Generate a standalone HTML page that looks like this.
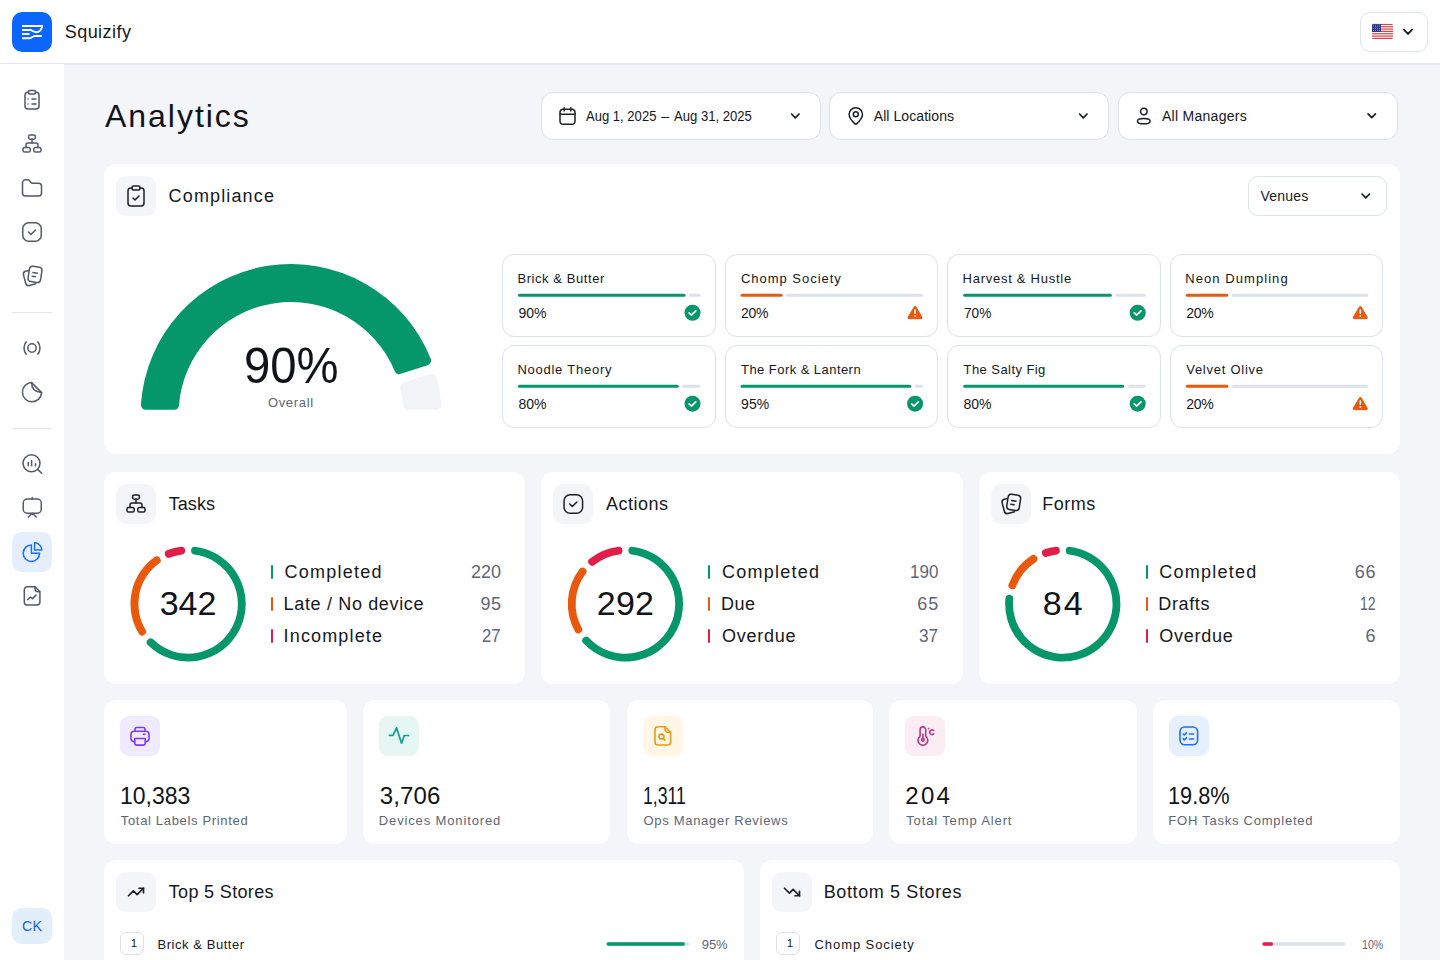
<!DOCTYPE html><html><head><meta charset="utf-8"><title>Squizify Analytics</title><style>
html,body{margin:0;padding:0;}body{width:1440px;height:960px;overflow:hidden;position:relative;background:#f3f5f9;font-family:"Liberation Sans",sans-serif;}
.b{position:absolute;box-sizing:border-box;}.t{position:absolute;white-space:nowrap;}svg{position:absolute;left:0;top:0;}
</style></head><body>
<div class="b" style="left:0px;top:0px;width:1440.00px;height:64.00px;background:#fff;border-radius:0px;border-bottom:1px solid #e6e8ee;box-sizing:border-box;"></div>
<div class="b" style="left:0px;top:64px;width:64.00px;height:896.00px;background:#fff;border-radius:0px;"></div>
<div class="b" style="left:64px;top:64px;width:1376.00px;height:1.00px;background:#e7eaf2;border-radius:0px;"></div>
<div class="b" style="left:12px;top:12px;width:40.00px;height:40.00px;background:#0a66ff;border-radius:10px;"></div>
<div class="b" style="left:1360px;top:12px;width:68.00px;height:40.00px;background:#fff;border-radius:10px;border:1px solid #dfe3ea;"></div>
<div class="b" style="left:12px;top:312px;width:40.00px;height:1.00px;background:#e3e6ec;border-radius:0px;"></div>
<div class="b" style="left:12px;top:428px;width:40.00px;height:1.00px;background:#e3e6ec;border-radius:0px;"></div>
<div class="b" style="left:12px;top:532px;width:40.00px;height:40.00px;background:#e4eefd;border-radius:10px;"></div>
<div class="b" style="left:12px;top:908px;width:40.00px;height:36.00px;background:#e2eefc;border-radius:10px;"></div>
<div class="b" style="left:541px;top:92px;width:280.00px;height:48.00px;background:#fff;border-radius:12px;border:1px solid #dce1ea;"></div>
<div class="b" style="left:829px;top:92px;width:280.00px;height:48.00px;background:#fff;border-radius:12px;border:1px solid #dce1ea;"></div>
<div class="b" style="left:1117.5px;top:92px;width:280.00px;height:48.00px;background:#fff;border-radius:12px;border:1px solid #dce1ea;"></div>
<div class="b" style="left:104px;top:164px;width:1296.00px;height:290.00px;background:#fff;border-radius:12px;"></div>
<div class="b" style="left:116px;top:176px;width:40.00px;height:40.00px;background:#f3f5f9;border-radius:10px;"></div>
<div class="b" style="left:1247.8px;top:176px;width:139.70px;height:40.00px;background:#fff;border-radius:10px;border:1px solid #dce1ea;"></div>
<div class="b" style="left:502px;top:254.25px;width:213.60px;height:82.50px;background:#fff;border-radius:12px;border:1px solid #dce1ea;"></div>
<div class="b" style="left:724.6px;top:254.25px;width:213.60px;height:82.50px;background:#fff;border-radius:12px;border:1px solid #dce1ea;"></div>
<div class="b" style="left:947.2px;top:254.25px;width:213.60px;height:82.50px;background:#fff;border-radius:12px;border:1px solid #dce1ea;"></div>
<div class="b" style="left:1169.8px;top:254.25px;width:213.60px;height:82.50px;background:#fff;border-radius:12px;border:1px solid #dce1ea;"></div>
<div class="b" style="left:502px;top:345.2px;width:213.60px;height:82.50px;background:#fff;border-radius:12px;border:1px solid #dce1ea;"></div>
<div class="b" style="left:724.6px;top:345.2px;width:213.60px;height:82.50px;background:#fff;border-radius:12px;border:1px solid #dce1ea;"></div>
<div class="b" style="left:947.2px;top:345.2px;width:213.60px;height:82.50px;background:#fff;border-radius:12px;border:1px solid #dce1ea;"></div>
<div class="b" style="left:1169.8px;top:345.2px;width:213.60px;height:82.50px;background:#fff;border-radius:12px;border:1px solid #dce1ea;"></div>
<div class="b" style="left:104px;top:472px;width:421.33px;height:212.00px;background:#fff;border-radius:12px;"></div>
<div class="b" style="left:116px;top:484px;width:40.00px;height:40.00px;background:#f3f5f9;border-radius:10px;"></div>
<div class="b" style="left:271px;top:565px;width:2.00px;height:14.00px;background:#059669;border-radius:1px;"></div>
<div class="b" style="left:271px;top:597px;width:2.00px;height:14.00px;background:#ea580c;border-radius:1px;"></div>
<div class="b" style="left:271px;top:629px;width:2.00px;height:14.00px;background:#e11d48;border-radius:1px;"></div>
<div class="b" style="left:541.33px;top:472px;width:421.33px;height:212.00px;background:#fff;border-radius:12px;"></div>
<div class="b" style="left:553.33px;top:484px;width:40.00px;height:40.00px;background:#f3f5f9;border-radius:10px;"></div>
<div class="b" style="left:708.33px;top:565px;width:2.00px;height:14.00px;background:#059669;border-radius:1px;"></div>
<div class="b" style="left:708.33px;top:597px;width:2.00px;height:14.00px;background:#ea580c;border-radius:1px;"></div>
<div class="b" style="left:708.33px;top:629px;width:2.00px;height:14.00px;background:#e11d48;border-radius:1px;"></div>
<div class="b" style="left:978.67px;top:472px;width:421.33px;height:212.00px;background:#fff;border-radius:12px;"></div>
<div class="b" style="left:990.67px;top:484px;width:40.00px;height:40.00px;background:#f3f5f9;border-radius:10px;"></div>
<div class="b" style="left:1145.67px;top:565px;width:2.00px;height:14.00px;background:#059669;border-radius:1px;"></div>
<div class="b" style="left:1145.67px;top:597px;width:2.00px;height:14.00px;background:#ea580c;border-radius:1px;"></div>
<div class="b" style="left:1145.67px;top:629px;width:2.00px;height:14.00px;background:#e11d48;border-radius:1px;"></div>
<div class="b" style="left:104px;top:700px;width:243.00px;height:144.00px;background:#fff;border-radius:12px;"></div>
<div class="b" style="left:120px;top:716px;width:40.00px;height:40.00px;background:#efeafd;border-radius:9px;"></div>
<div class="b" style="left:363px;top:700px;width:247.00px;height:144.00px;background:#fff;border-radius:12px;"></div>
<div class="b" style="left:379px;top:716px;width:40.00px;height:40.00px;background:#e5f6f3;border-radius:9px;"></div>
<div class="b" style="left:626.6px;top:700px;width:246.50px;height:144.00px;background:#fff;border-radius:12px;"></div>
<div class="b" style="left:642.6px;top:716px;width:40.00px;height:40.00px;background:#fff6e6;border-radius:9px;"></div>
<div class="b" style="left:889.4px;top:700px;width:247.35px;height:144.00px;background:#fff;border-radius:12px;"></div>
<div class="b" style="left:905.4px;top:716px;width:40.00px;height:40.00px;background:#fcecf3;border-radius:9px;"></div>
<div class="b" style="left:1152.5px;top:700px;width:247.50px;height:144.00px;background:#fff;border-radius:12px;"></div>
<div class="b" style="left:1168.5px;top:716px;width:40.00px;height:40.00px;background:#e6effe;border-radius:9px;"></div>
<div class="b" style="left:104px;top:860px;width:640.00px;height:140.00px;background:#fff;border-radius:12px;"></div>
<div class="b" style="left:116px;top:872px;width:40.00px;height:40.00px;background:#f3f5f9;border-radius:10px;"></div>
<div class="b" style="left:120.2px;top:932.3px;width:23.60px;height:23.20px;background:#fff;border-radius:6px;border:1px solid #dce1ea;"></div>
<div class="b" style="left:760px;top:860px;width:640.00px;height:140.00px;background:#fff;border-radius:12px;"></div>
<div class="b" style="left:772px;top:872px;width:40.00px;height:40.00px;background:#f3f5f9;border-radius:10px;"></div>
<div class="b" style="left:776.2px;top:932.3px;width:23.60px;height:23.20px;background:#fff;border-radius:6px;border:1px solid #dce1ea;"></div>
<svg width="1440" height="960" viewBox="0 0 1440 960"><g fill="none" stroke="#fff" stroke-width="1.9" stroke-linecap="butt"><path d="M22 26H42c0 4-3 6.2-6 6.2-2.4 0-3.6-1.3-5-2.2H22"/><path d="M22 34H29.5"/><path d="M22 38.2h8c1.6 0 2.4-2.2 5-2.2H42"/></g><clipPath id="fc"><rect x="1372" y="23.8" width="21" height="15.2" rx="1.6"/></clipPath><g clip-path="url(#fc)"><rect x="1372" y="23.8" width="21" height="15.2" fill="#fff"/><rect x="1372" y="23.80" width="21" height="1.17" fill="#e0393e"/><rect x="1372" y="26.14" width="21" height="1.17" fill="#e0393e"/><rect x="1372" y="28.48" width="21" height="1.17" fill="#e0393e"/><rect x="1372" y="30.82" width="21" height="1.17" fill="#e0393e"/><rect x="1372" y="33.15" width="21" height="1.17" fill="#e0393e"/><rect x="1372" y="35.49" width="21" height="1.17" fill="#e0393e"/><rect x="1372" y="37.83" width="21" height="1.17" fill="#e0393e"/><rect x="1372" y="23.8" width="9" height="8.18" fill="#2c3a84"/><circle cx="1373.30" cy="25.00" r="0.45" fill="#c9d0f0"/><circle cx="1375.40" cy="25.00" r="0.45" fill="#c9d0f0"/><circle cx="1377.50" cy="25.00" r="0.45" fill="#c9d0f0"/><circle cx="1379.60" cy="25.00" r="0.45" fill="#c9d0f0"/><circle cx="1373.30" cy="26.85" r="0.45" fill="#c9d0f0"/><circle cx="1375.40" cy="26.85" r="0.45" fill="#c9d0f0"/><circle cx="1377.50" cy="26.85" r="0.45" fill="#c9d0f0"/><circle cx="1379.60" cy="26.85" r="0.45" fill="#c9d0f0"/><circle cx="1373.30" cy="28.70" r="0.45" fill="#c9d0f0"/><circle cx="1375.40" cy="28.70" r="0.45" fill="#c9d0f0"/><circle cx="1377.50" cy="28.70" r="0.45" fill="#c9d0f0"/><circle cx="1379.60" cy="28.70" r="0.45" fill="#c9d0f0"/><circle cx="1373.30" cy="30.55" r="0.45" fill="#c9d0f0"/><circle cx="1375.40" cy="30.55" r="0.45" fill="#c9d0f0"/><circle cx="1377.50" cy="30.55" r="0.45" fill="#c9d0f0"/><circle cx="1379.60" cy="30.55" r="0.45" fill="#c9d0f0"/></g><path d="M1403.90 29.65L1408.00 33.95L1412.10 29.65" fill="none" stroke="#1d2026" stroke-width="1.9" stroke-linecap="round" stroke-linejoin="round"/><g transform="translate(20 88) scale(1.0)" fill="none" stroke="#525a68" stroke-width="1.500" stroke-linecap="round" stroke-linejoin="round"><rect x="8.5" y="2.5" width="7" height="3.5" rx="1.2"/><path d="M15.5 4.2h.5a3 3 0 0 1 3 3V18a3 3 0 0 1-3 3H8a3 3 0 0 1-3-3V7.2a3 3 0 0 1 3-3h.5"/><path d="M12 11h4"/><path d="M12 16h4"/><path d="M8 11h.01"/><path d="M8 16h.01"/></g><g transform="translate(20 132) scale(1.0)" fill="none" stroke="#525a68" stroke-width="1.500" stroke-linecap="round" stroke-linejoin="round"><rect x="8.6" y="3" width="6.8" height="4.2" rx="1.6"/><rect x="3" y="15.4" width="7.2" height="4.6" rx="1.6"/><rect x="13.8" y="15.4" width="7.2" height="4.6" rx="1.6"/><path d="M12 7v4"/><path d="M6 15.5V13a2 2 0 0 1 2-2h8a2 2 0 0 1 2 2v2.5"/></g><g transform="translate(20 176) scale(1.0)" fill="none" stroke="#525a68" stroke-width="1.500" stroke-linecap="round" stroke-linejoin="round"><path d="M18.5 20a3 3 0 0 0 3-3V10.3a3 3 0 0 0-3-3h-6a2 2 0 0 1-1.6-.8L9.6 4.8A3 3 0 0 0 7.2 3.8H5.5a3 3 0 0 0-3 3V17a3 3 0 0 0 3 3Z"/></g><g transform="translate(20 220) scale(1.0)" fill="none" stroke="#525a68" stroke-width="1.500" stroke-linecap="round" stroke-linejoin="round"><rect x="2.75" y="2.75" width="18.5" height="18.5" rx="6"/><path d="m8.5 12 2.5 2.5 4.5-4.5"/></g><g transform="translate(20 264) scale(1.0)" fill="none" stroke="#525a68" stroke-width="1.500" stroke-linecap="round" stroke-linejoin="round"><rect x="8.7" y="2.7" width="12.6" height="15.4" rx="3.2" transform="rotate(9 15 10.4)"/><path d="M8.5 6.5 5.7 7.2a3 3 0 0 0-2.2 3.6l2.2 8.5a3 3 0 0 0 3.6 2.2l6.5-1.7"/><path d="M12.9 8.5l4.4.7"/><path d="M12.2 12.3l3.2.5"/></g><g transform="translate(20 336) scale(1.0)" fill="none" stroke="#525a68" stroke-width="1.500" stroke-linecap="round" stroke-linejoin="round"><circle cx="12" cy="12" r="4.2"/><path d="M6.2 5.8c-2.9 3.5-2.9 8.9 0 12.4"/><path d="M17.8 5.8c2.9 3.5 2.9 8.9 0 12.4"/></g><g transform="translate(20 380) scale(1.0)" fill="none" stroke="#525a68" stroke-width="1.500" stroke-linecap="round" stroke-linejoin="round"><path d="M11.6 2.6A9.6 9.6 0 1 0 21.6 12.6"/><path d="M11.6 2.6 21.6 12.6"/><path d="M11.8 3c-.4 4.8 2 8.5 9.4 9.4"/></g><g transform="translate(20 452) scale(1.0)" fill="none" stroke="#525a68" stroke-width="1.500" stroke-linecap="round" stroke-linejoin="round"><circle cx="11.5" cy="11.2" r="8.5"/><path d="M17.7 17.4 21.6 21.3"/><path d="M8.3 13.8v-3.4"/><path d="M11.6 13.8v-5.2"/><path d="M15.5 13.8v-2"/></g><g transform="translate(20 496) scale(1.0)" fill="none" stroke="#525a68" stroke-width="1.500" stroke-linecap="round" stroke-linejoin="round"><rect x="3.25" y="3" width="18" height="14.2" rx="4"/><path d="M12.25 1.5V3"/><path d="M8.3 21 12.25 17.2 16.2 21"/></g><g transform="translate(20 584) scale(1.0)" fill="none" stroke="#525a68" stroke-width="1.500" stroke-linecap="round" stroke-linejoin="round"><path d="M15 2.8H7.3a3 3 0 0 0-3 3V18a3 3 0 0 0 3 3h9.6a3 3 0 0 0 3-3V7.7Z"/><path d="M15 2.8v2a3 3 0 0 0 3 3h1.9"/><path d="M7.5 15.8l3-2.8 2 1.6 3.5-3.5"/></g><g transform="translate(20 540) scale(1.0)" fill="none" stroke="#1a6dff" stroke-width="1.500" stroke-linecap="round" stroke-linejoin="round"><path d="M11.4 5A8.2 8.2 0 1 0 19.6 13.2H11.4Z"/><path d="M14.6 2.8V10H21.8A7.2 7.2 0 0 0 14.6 2.8Z"/></g><g transform="translate(557.5 106) scale(0.8333333333333334)" fill="none" stroke="#1d2026" stroke-width="1.800" stroke-linecap="round" stroke-linejoin="round"><rect x="3" y="4" width="18" height="18" rx="4"/><path d="M8 2v4"/><path d="M16 2v4"/><path d="M3 10h18"/></g><path d="M791.60 114.00L795.30 117.80L799.00 114.00" fill="none" stroke="#1d2026" stroke-width="1.7" stroke-linecap="round" stroke-linejoin="round"/><g transform="translate(845.8 106) scale(0.8333333333333334)" fill="none" stroke="#1d2026" stroke-width="1.800" stroke-linecap="round" stroke-linejoin="round"><path d="M20 10c0 4.993-5.539 10.193-7.399 11.799a1 1 0 0 1-1.202 0C9.539 20.193 4 14.993 4 10a8 8 0 0 1 16 0"/><circle cx="12" cy="10" r="3"/></g><path d="M1079.60 114.00L1083.30 117.80L1087.00 114.00" fill="none" stroke="#1d2026" stroke-width="1.7" stroke-linecap="round" stroke-linejoin="round"/><g transform="translate(1133.8 106) scale(0.8333333333333334)" fill="none" stroke="#1d2026" stroke-width="1.800" stroke-linecap="round" stroke-linejoin="round"><circle cx="12" cy="6.6" r="3.9"/><ellipse cx="12" cy="18.2" rx="7.6" ry="3.2"/></g><path d="M1368.05 113.80L1371.75 117.60L1375.45 113.80" fill="none" stroke="#1d2026" stroke-width="1.7" stroke-linecap="round" stroke-linejoin="round"/><g transform="translate(124 184) scale(1.0)" fill="none" stroke="#1d2026" stroke-width="1.500" stroke-linecap="round" stroke-linejoin="round"><rect x="8" y="2" width="8" height="4" rx="1.5"/><path d="M16 4h1a3 3 0 0 1 3 3v12a3 3 0 0 1-3 3H7a3 3 0 0 1-3-3V7a3 3 0 0 1 3-3h1"/><path d="m9 14 2 2 4-4"/></g><path d="M1362.05 194.00L1365.75 197.80L1369.45 194.00" fill="none" stroke="#1d2026" stroke-width="1.7" stroke-linecap="round" stroke-linejoin="round"/><path d="M145.92 409.80A5 5 0 0 1 140.93 404.47A150.4 150.4 0 0 1 430.66 358.58A5 5 0 0 1 427.56 365.19L400.86 373.87A5 5 0 0 1 394.70 371.04A112.4 112.4 0 0 0 178.98 405.21A5 5 0 0 1 173.99 409.80Z" fill="#059669"/><path d="M430.40 373.94A5 5 0 0 1 436.80 377.47A150.4 150.4 0 0 1 441.07 404.47A5 5 0 0 1 436.08 409.80L408.01 409.80A5 5 0 0 1 403.02 405.21A112.4 112.4 0 0 0 400.38 388.52A5 5 0 0 1 403.70 382.62Z" fill="#f1f3f7"/><line x1="519.50" y1="295.35" x2="684.10" y2="295.35" stroke="#059669" stroke-width="3" stroke-linecap="round"/><line x1="690.60" y1="295.35" x2="698.90" y2="295.35" stroke="#dde1ea" stroke-width="3" stroke-linecap="round"/><circle cx="692.50" cy="312.75" r="8" fill="#059669"/><path d="M689.10 312.95l2.3 2.2 4.4-4.3" fill="none" stroke="#fff" stroke-width="1.7" stroke-linecap="round" stroke-linejoin="round"/><line x1="742.10" y1="295.35" x2="781.10" y2="295.35" stroke="#ea580c" stroke-width="3" stroke-linecap="round"/><line x1="787.60" y1="295.35" x2="921.50" y2="295.35" stroke="#dde1ea" stroke-width="3" stroke-linecap="round"/><path d="M914.20 306.95a1.1 1.1 0 0 1 1.8 0l5.9 10.2a1.1 1.1 0 0 1-.95 1.6H909.10a1.1 1.1 0 0 1-.95-1.6Z" fill="#ea580c" stroke="#ea580c" stroke-width="1" stroke-linejoin="round"/><path d="M915.10 310.15v3.2" stroke="#fff" stroke-width="1.6" stroke-linecap="round"/><circle cx="915.10" cy="316.05" r="0.9" fill="#fff"/><line x1="964.70" y1="295.35" x2="1110.30" y2="295.35" stroke="#059669" stroke-width="3" stroke-linecap="round"/><line x1="1116.80" y1="295.35" x2="1144.10" y2="295.35" stroke="#dde1ea" stroke-width="3" stroke-linecap="round"/><circle cx="1137.70" cy="312.75" r="8" fill="#059669"/><path d="M1134.30 312.95l2.3 2.2 4.4-4.3" fill="none" stroke="#fff" stroke-width="1.7" stroke-linecap="round" stroke-linejoin="round"/><line x1="1187.30" y1="295.35" x2="1226.80" y2="295.35" stroke="#ea580c" stroke-width="3" stroke-linecap="round"/><line x1="1233.30" y1="295.35" x2="1366.70" y2="295.35" stroke="#dde1ea" stroke-width="3" stroke-linecap="round"/><path d="M1359.40 306.95a1.1 1.1 0 0 1 1.8 0l5.9 10.2a1.1 1.1 0 0 1-.95 1.6H1354.30a1.1 1.1 0 0 1-.95-1.6Z" fill="#ea580c" stroke="#ea580c" stroke-width="1" stroke-linejoin="round"/><path d="M1360.30 310.15v3.2" stroke="#fff" stroke-width="1.6" stroke-linecap="round"/><circle cx="1360.30" cy="316.05" r="0.9" fill="#fff"/><line x1="519.50" y1="386.30" x2="677.25" y2="386.30" stroke="#059669" stroke-width="3" stroke-linecap="round"/><line x1="683.75" y1="386.30" x2="698.90" y2="386.30" stroke="#dde1ea" stroke-width="3" stroke-linecap="round"/><circle cx="692.50" cy="403.70" r="8" fill="#059669"/><path d="M689.10 403.90l2.3 2.2 4.4-4.3" fill="none" stroke="#fff" stroke-width="1.7" stroke-linecap="round" stroke-linejoin="round"/><line x1="742.10" y1="386.30" x2="909.70" y2="386.30" stroke="#059669" stroke-width="3" stroke-linecap="round"/><line x1="916.20" y1="386.30" x2="921.50" y2="386.30" stroke="#dde1ea" stroke-width="3" stroke-linecap="round"/><circle cx="915.10" cy="403.70" r="8" fill="#059669"/><path d="M911.70 403.90l2.3 2.2 4.4-4.3" fill="none" stroke="#fff" stroke-width="1.7" stroke-linecap="round" stroke-linejoin="round"/><line x1="964.70" y1="386.30" x2="1122.70" y2="386.30" stroke="#059669" stroke-width="3" stroke-linecap="round"/><line x1="1129.20" y1="386.30" x2="1144.10" y2="386.30" stroke="#dde1ea" stroke-width="3" stroke-linecap="round"/><circle cx="1137.70" cy="403.70" r="8" fill="#059669"/><path d="M1134.30 403.90l2.3 2.2 4.4-4.3" fill="none" stroke="#fff" stroke-width="1.7" stroke-linecap="round" stroke-linejoin="round"/><line x1="1187.30" y1="386.30" x2="1226.80" y2="386.30" stroke="#ea580c" stroke-width="3" stroke-linecap="round"/><line x1="1233.30" y1="386.30" x2="1366.70" y2="386.30" stroke="#dde1ea" stroke-width="3" stroke-linecap="round"/><path d="M1359.40 397.90a1.1 1.1 0 0 1 1.8 0l5.9 10.2a1.1 1.1 0 0 1-.95 1.6H1354.30a1.1 1.1 0 0 1-.95-1.6Z" fill="#ea580c" stroke="#ea580c" stroke-width="1" stroke-linejoin="round"/><path d="M1360.30 401.10v3.2" stroke="#fff" stroke-width="1.6" stroke-linecap="round"/><circle cx="1360.30" cy="407.00" r="0.9" fill="#fff"/><g transform="translate(124 492) scale(1.0)" fill="none" stroke="#1d2026" stroke-width="1.500" stroke-linecap="round" stroke-linejoin="round"><rect x="8.6" y="3" width="6.8" height="4.2" rx="1.6"/><rect x="3" y="15.4" width="7.2" height="4.6" rx="1.6"/><rect x="13.8" y="15.4" width="7.2" height="4.6" rx="1.6"/><path d="M12 7v4"/><path d="M6 15.5V13a2 2 0 0 1 2-2h8a2 2 0 0 1 2 2v2.5"/></g><path d="M191.10 550.08A3.4 3.4 0 0 1 194.90 546.70A57.6 57.6 0 1 1 147.51 644.77A3.4 3.4 0 0 1 147.80 639.70L148.59 639.07A3.4 3.4 0 0 1 153.09 639.32A49.800000000000004 49.800000000000004 0 1 0 194.09 554.46A3.4 3.4 0 0 1 191.10 551.09Z" fill="#059669"/><path d="M144.07 635.00A3.4 3.4 0 0 1 139.06 634.12A57.6 57.6 0 0 1 154.90 556.83A3.4 3.4 0 0 1 159.85 557.99L160.33 558.88A3.4 3.4 0 0 1 159.30 563.27A49.800000000000004 49.800000000000004 0 0 0 145.64 629.93A3.4 3.4 0 0 1 144.86 634.37Z" fill="#ea580c"/><path d="M165.12 555.14A3.4 3.4 0 0 1 166.86 550.36A57.6 57.6 0 0 1 181.30 546.70A3.4 3.4 0 0 1 185.10 550.08L185.10 551.09A3.4 3.4 0 0 1 182.11 554.46A49.800000000000004 49.800000000000004 0 0 0 169.84 557.57A3.4 3.4 0 0 1 165.60 556.02Z" fill="#e11d48"/><g transform="translate(561.33 492) scale(1.0)" fill="none" stroke="#1d2026" stroke-width="1.500" stroke-linecap="round" stroke-linejoin="round"><rect x="2.75" y="2.75" width="18.5" height="18.5" rx="6"/><path d="m8.5 12 2.5 2.5 4.5-4.5"/></g><path d="M628.43 550.08A3.4 3.4 0 0 1 632.23 546.70A57.6 57.6 0 1 1 582.99 642.84A3.4 3.4 0 0 1 583.51 637.78L584.32 637.19A3.4 3.4 0 0 1 588.81 637.65A49.800000000000004 49.800000000000004 0 1 0 631.42 554.46A3.4 3.4 0 0 1 628.43 551.09Z" fill="#059669"/><path d="M580.00 632.91A3.4 3.4 0 0 1 575.04 631.80A57.6 57.6 0 0 1 579.80 568.75A3.4 3.4 0 0 1 584.87 568.40L585.59 569.10A3.4 3.4 0 0 1 585.91 573.60A49.800000000000004 49.800000000000004 0 0 0 581.81 627.92A3.4 3.4 0 0 1 580.82 632.32Z" fill="#ea580c"/><path d="M589.06 564.11A3.4 3.4 0 0 1 589.31 559.03A57.6 57.6 0 0 1 618.63 546.70A3.4 3.4 0 0 1 622.43 550.08L622.43 551.09A3.4 3.4 0 0 1 619.44 554.46A49.800000000000004 49.800000000000004 0 0 0 594.29 565.04A3.4 3.4 0 0 1 589.78 564.82Z" fill="#e11d48"/><g transform="translate(998.67 492) scale(1.0)" fill="none" stroke="#1d2026" stroke-width="1.500" stroke-linecap="round" stroke-linejoin="round"><rect x="8.7" y="2.7" width="12.6" height="15.4" rx="3.2" transform="rotate(9 15 10.4)"/><path d="M8.5 6.5 5.7 7.2a3 3 0 0 0-2.2 3.6l2.2 8.5a3 3 0 0 0 3.6 2.2l6.5-1.7"/><path d="M12.9 8.5l4.4.7"/><path d="M12.2 12.3l3.2.5"/></g><path d="M1065.77 550.08A3.4 3.4 0 0 1 1069.57 546.70A57.6 57.6 0 1 1 1005.49 597.80A3.4 3.4 0 0 1 1009.63 594.85L1010.61 595.07A3.4 3.4 0 0 1 1013.24 598.74A49.800000000000004 49.800000000000004 0 1 0 1068.76 554.46A3.4 3.4 0 0 1 1065.77 551.09Z" fill="#059669"/><path d="M1010.97 589.00A3.4 3.4 0 0 1 1008.52 584.54A57.6 57.6 0 0 1 1031.83 555.32A3.4 3.4 0 0 1 1036.72 556.71L1037.15 557.62A3.4 3.4 0 0 1 1035.92 561.96A49.800000000000004 49.800000000000004 0 0 0 1015.90 587.06A3.4 3.4 0 0 1 1011.95 589.22Z" fill="#ea580c"/><path d="M1042.12 554.11A3.4 3.4 0 0 1 1044.08 549.42A57.6 57.6 0 0 1 1055.97 546.70A3.4 3.4 0 0 1 1059.77 550.08L1059.77 551.09A3.4 3.4 0 0 1 1056.78 554.46A49.800000000000004 49.800000000000004 0 0 0 1046.72 556.76A3.4 3.4 0 0 1 1042.56 555.01Z" fill="#e11d48"/><g fill="none" stroke="#7c3aed" stroke-width="1.6" stroke-linecap="round" stroke-linejoin="round"><path d="M135 731.3V729.5a2 2 0 0 1 2-2h6a2 2 0 0 1 2 2v1.8"/><path d="M134.6 741.6H134a3 3 0 0 1-3-3v-4.3a3 3 0 0 1 3-3h12a3 3 0 0 1 3 3v4.3a3 3 0 0 1-3 3h-.6"/><path d="M134.7 738.5h10.6v4.6a2 2 0 0 1-2 2h-6.6a2 2 0 0 1-2-2z"/><path d="M143.3 734.2h1.6"/></g><path d="M389.4 735.3H393L396.5 727.8L401.6 743.2L404.3 735.5H408.6" fill="none" stroke="#0f9f8f" stroke-width="1.7" stroke-linecap="round" stroke-linejoin="round"/><g fill="none" stroke="#e89b12" stroke-width="1.6" stroke-linecap="round" stroke-linejoin="round"><path d="M665 726.8H658a3 3 0 0 0-3 3V742a3 3 0 0 0 3 3h9.6a3 3 0 0 0 3-3v-9.6Z"/><path d="M665 726.8v2.6a3 3 0 0 0 3 3h2.6"/><circle cx="661.5" cy="736.6" r="2.5"/><path d="M663.3 738.5l1.5 1.6"/></g><g fill="none" stroke="#bd3587" stroke-width="1.6" stroke-linecap="round" stroke-linejoin="round"><path d="M920.1 736.3V729.7a2.8 2.8 0 0 1 5.6 0V736.3A4.9 4.9 0 1 1 920.1 736.3Z"/><path d="M922.9 734.3v3.4"/><circle cx="922.9" cy="739.95" r="1.3"/><path d="M933.6 730.5A2.3 2.3 0 1 0 933.6 733.9"/><path d="M928.5 728.6h.01"/></g><g fill="none" stroke="#1a6dff" stroke-width="1.6" stroke-linecap="round" stroke-linejoin="round"><rect x="1180" y="727" width="17.6" height="17.8" rx="4.8"/><path d="M1183.2 734l1.1 1 2.2-2.2"/><path d="M1183.2 738.9l1.1 1 2.2-2.2"/><path d="M1189.5 734h4"/><path d="M1189.5 739h4"/></g><g transform="translate(127 883) scale(0.75)" fill="none" stroke="#1d2026" stroke-width="2.267" stroke-linecap="round" stroke-linejoin="round"><polyline points="22 7 13.5 15.5 8.5 10.5 2 17"/><polyline points="16 7 22 7 22 13"/></g><line x1="608.2" y1="944" x2="687.3" y2="944" stroke="#dde1ea" stroke-width="3.4" stroke-linecap="round"/><line x1="608.2" y1="944" x2="683.17" y2="944" stroke="#059669" stroke-width="3.4" stroke-linecap="round"/><g transform="translate(783 883) scale(0.75)" fill="none" stroke="#1d2026" stroke-width="2.267" stroke-linecap="round" stroke-linejoin="round"><polyline points="22 17 13.5 8.5 8.5 13.5 2 7"/><polyline points="16 17 22 17 22 11"/></g><line x1="1264.0" y1="944" x2="1343.6" y2="944" stroke="#dde1ea" stroke-width="3.4" stroke-linecap="round"/><line x1="1264.0" y1="944" x2="1271.39" y2="944" stroke="#e11d48" stroke-width="3.4" stroke-linecap="round"/></svg>
<div class="t" style="left:64.70px;top:22.56px;font-size:18px;line-height:18px;letter-spacing:0.468px;color:#16181d;">Squizify</div>
<div class="t" style="left:21.90px;top:918.30px;font-size:15px;line-height:15px;letter-spacing:0.000px;color:#1763d6;transform:scaleX(0.9600);transform-origin:0 0;">CK</div>
<div class="t" style="left:105.00px;top:99.81px;font-size:32px;line-height:32px;letter-spacing:1.969px;color:#111318;">Analytics</div>
<div class="t" style="left:585.60px;top:109.45px;font-size:14px;line-height:14px;letter-spacing:0.000px;color:#16181d;transform:scaleX(0.9323);transform-origin:0 0;">Aug 1, 2025</div>
<div class="t" style="left:661.25px;top:109.45px;font-size:14px;line-height:14px;letter-spacing:0.000px;color:#16181d;">–</div>
<div class="t" style="left:673.75px;top:109.45px;font-size:14px;line-height:14px;letter-spacing:0.000px;color:#16181d;transform:scaleX(0.9352);transform-origin:0 0;">Aug 31, 2025</div>
<div class="t" style="left:873.75px;top:109.15px;font-size:14px;line-height:14px;letter-spacing:0.073px;color:#16181d;">All Locations</div>
<div class="t" style="left:1162.00px;top:109.15px;font-size:14px;line-height:14px;letter-spacing:0.277px;color:#16181d;">All Managers</div>
<div class="t" style="left:168.60px;top:186.66px;font-size:18px;line-height:18px;letter-spacing:1.141px;color:#16181d;">Compliance</div>
<div class="t" style="left:1260.50px;top:188.85px;font-size:14px;line-height:14px;letter-spacing:0.208px;color:#16181d;">Venues</div>
<div class="t" style="left:243.91px;top:340.88px;font-size:50px;line-height:50px;letter-spacing:0.000px;color:#111318;transform:scaleX(0.9450);transform-origin:0 0;">90%</div>
<div class="t" style="left:267.90px;top:395.80px;font-size:13px;line-height:13px;letter-spacing:0.685px;color:#5e6676;">Overall</div>
<div class="t" style="left:517.40px;top:271.95px;font-size:13px;line-height:13px;letter-spacing:0.574px;color:#16181d;">Brick &amp; Butter</div>
<div class="t" style="left:518.40px;top:306.20px;font-size:14px;line-height:14px;letter-spacing:-0.036px;color:#16181d;">90%</div>
<div class="t" style="left:741.00px;top:271.95px;font-size:13px;line-height:13px;letter-spacing:0.971px;color:#16181d;">Chomp Society</div>
<div class="t" style="left:741.00px;top:306.20px;font-size:14px;line-height:14px;letter-spacing:-0.336px;color:#16181d;">20%</div>
<div class="t" style="left:962.60px;top:271.95px;font-size:13px;line-height:13px;letter-spacing:0.733px;color:#16181d;">Harvest &amp; Hustle</div>
<div class="t" style="left:963.60px;top:306.20px;font-size:14px;line-height:14px;letter-spacing:0.000px;color:#16181d;transform:scaleX(0.9720);transform-origin:0 0;">70%</div>
<div class="t" style="left:1185.20px;top:271.95px;font-size:13px;line-height:13px;letter-spacing:1.069px;color:#16181d;">Neon Dumpling</div>
<div class="t" style="left:1186.20px;top:306.20px;font-size:14px;line-height:14px;letter-spacing:-0.236px;color:#16181d;">20%</div>
<div class="t" style="left:517.40px;top:362.90px;font-size:13px;line-height:13px;letter-spacing:0.753px;color:#16181d;">Noodle Theory</div>
<div class="t" style="left:518.40px;top:397.15px;font-size:14px;line-height:14px;letter-spacing:-0.036px;color:#16181d;">80%</div>
<div class="t" style="left:741.00px;top:362.90px;font-size:13px;line-height:13px;letter-spacing:0.449px;color:#16181d;">The Fork &amp; Lantern</div>
<div class="t" style="left:741.00px;top:397.15px;font-size:14px;line-height:14px;letter-spacing:0.114px;color:#16181d;">95%</div>
<div class="t" style="left:963.60px;top:362.90px;font-size:13px;line-height:13px;letter-spacing:0.429px;color:#16181d;">The Salty Fig</div>
<div class="t" style="left:963.60px;top:397.15px;font-size:14px;line-height:14px;letter-spacing:-0.036px;color:#16181d;">80%</div>
<div class="t" style="left:1186.20px;top:362.90px;font-size:13px;line-height:13px;letter-spacing:0.744px;color:#16181d;">Velvet Olive</div>
<div class="t" style="left:1186.20px;top:397.15px;font-size:14px;line-height:14px;letter-spacing:-0.236px;color:#16181d;">20%</div>
<div class="t" style="left:168.70px;top:495.06px;font-size:18px;line-height:18px;letter-spacing:0.072px;color:#16181d;">Tasks</div>
<div class="t" style="left:159.75px;top:586.12px;font-size:34px;line-height:34px;letter-spacing:-0.059px;color:#111318;">342</div>
<div class="t" style="left:284.60px;top:562.96px;font-size:18px;line-height:18px;letter-spacing:1.245px;color:#16181d;">Completed</div>
<div class="t" style="left:471.10px;top:563.16px;font-size:18px;line-height:18px;letter-spacing:-0.111px;color:#5e6676;">220</div>
<div class="t" style="left:283.60px;top:594.96px;font-size:18px;line-height:18px;letter-spacing:0.656px;color:#16181d;">Late / No device</div>
<div class="t" style="left:480.60px;top:595.16px;font-size:18px;line-height:18px;letter-spacing:0.289px;color:#5e6676;">95</div>
<div class="t" style="left:283.60px;top:626.96px;font-size:18px;line-height:18px;letter-spacing:1.151px;color:#16181d;">Incomplete</div>
<div class="t" style="left:482.40px;top:627.16px;font-size:18px;line-height:18px;letter-spacing:0.000px;color:#5e6676;transform:scaleX(0.9245);transform-origin:0 0;">27</div>
<div class="t" style="left:606.03px;top:495.06px;font-size:18px;line-height:18px;letter-spacing:0.512px;color:#16181d;">Actions</div>
<div class="t" style="left:596.78px;top:586.12px;font-size:34px;line-height:34px;letter-spacing:0.241px;color:#111318;">292</div>
<div class="t" style="left:721.93px;top:562.96px;font-size:18px;line-height:18px;letter-spacing:1.245px;color:#16181d;">Completed</div>
<div class="t" style="left:909.89px;top:563.16px;font-size:18px;line-height:18px;letter-spacing:0.000px;color:#5e6676;transform:scaleX(0.9441);transform-origin:0 0;">190</div>
<div class="t" style="left:720.93px;top:594.96px;font-size:18px;line-height:18px;letter-spacing:0.595px;color:#16181d;">Due</div>
<div class="t" style="left:917.33px;top:595.16px;font-size:18px;line-height:18px;letter-spacing:0.889px;color:#5e6676;">65</div>
<div class="t" style="left:721.93px;top:626.96px;font-size:18px;line-height:18px;letter-spacing:0.745px;color:#16181d;">Overdue</div>
<div class="t" style="left:919.13px;top:627.16px;font-size:18px;line-height:18px;letter-spacing:0.000px;color:#5e6676;transform:scaleX(0.9545);transform-origin:0 0;">37</div>
<div class="t" style="left:1042.37px;top:495.06px;font-size:18px;line-height:18px;letter-spacing:0.476px;color:#16181d;">Forms</div>
<div class="t" style="left:1042.67px;top:586.12px;font-size:34px;line-height:34px;letter-spacing:2.291px;color:#111318;">84</div>
<div class="t" style="left:1159.27px;top:562.96px;font-size:18px;line-height:18px;letter-spacing:1.245px;color:#16181d;">Completed</div>
<div class="t" style="left:1354.67px;top:563.16px;font-size:18px;line-height:18px;letter-spacing:0.889px;color:#5e6676;">66</div>
<div class="t" style="left:1158.27px;top:594.96px;font-size:18px;line-height:18px;letter-spacing:0.639px;color:#16181d;">Drafts</div>
<div class="t" style="left:1359.89px;top:595.16px;font-size:18px;line-height:18px;letter-spacing:0.000px;color:#5e6676;transform:scaleX(0.7838);transform-origin:0 0;">12</div>
<div class="t" style="left:1159.27px;top:626.96px;font-size:18px;line-height:18px;letter-spacing:0.745px;color:#16181d;">Overdue</div>
<div class="t" style="left:1365.57px;top:627.16px;font-size:18px;line-height:18px;letter-spacing:0.000px;color:#5e6676;">6</div>
<div class="t" style="left:119.84px;top:783.88px;font-size:24px;line-height:24px;letter-spacing:0.000px;color:#111318;transform:scaleX(0.9589);transform-origin:0 0;">10,383</div>
<div class="t" style="left:120.80px;top:813.80px;font-size:13px;line-height:13px;letter-spacing:0.666px;color:#5e6676;">Total Labels Printed</div>
<div class="t" style="left:379.80px;top:783.88px;font-size:24px;line-height:24px;letter-spacing:0.147px;color:#111318;">3,706</div>
<div class="t" style="left:378.80px;top:813.80px;font-size:13px;line-height:13px;letter-spacing:0.861px;color:#5e6676;">Devices Monitored</div>
<div class="t" style="left:642.66px;top:783.88px;font-size:24px;line-height:24px;letter-spacing:0.000px;color:#111318;transform:scaleX(0.7360);transform-origin:0 0;">1,311</div>
<div class="t" style="left:643.40px;top:813.80px;font-size:13px;line-height:13px;letter-spacing:0.711px;color:#5e6676;">Ops Manager Reviews</div>
<div class="t" style="left:905.20px;top:783.88px;font-size:24px;line-height:24px;letter-spacing:2.352px;color:#111318;">204</div>
<div class="t" style="left:906.20px;top:813.80px;font-size:13px;line-height:13px;letter-spacing:0.867px;color:#5e6676;">Total Temp Alert</div>
<div class="t" style="left:1168.39px;top:783.88px;font-size:24px;line-height:24px;letter-spacing:0.000px;color:#111318;transform:scaleX(0.9054);transform-origin:0 0;">19.8%</div>
<div class="t" style="left:1168.30px;top:813.80px;font-size:13px;line-height:13px;letter-spacing:0.765px;color:#5e6676;">FOH Tasks Completed</div>
<div class="t" style="left:168.75px;top:882.51px;font-size:18px;line-height:18px;letter-spacing:0.336px;color:#16181d;">Top 5 Stores</div>
<div class="t" style="left:130.80px;top:938.07px;font-size:11.5px;line-height:11.5px;letter-spacing:0.000px;color:#16181d;">1</div>
<div class="t" style="left:157.50px;top:938.00px;font-size:13px;line-height:13px;letter-spacing:0.547px;color:#16181d;">Brick &amp; Butter</div>
<div class="t" style="left:701.80px;top:938.00px;font-size:13px;line-height:13px;letter-spacing:-0.130px;color:#5e6676;">95%</div>
<div class="t" style="left:823.75px;top:882.51px;font-size:18px;line-height:18px;letter-spacing:0.617px;color:#16181d;">Bottom 5 Stores</div>
<div class="t" style="left:786.80px;top:938.07px;font-size:11.5px;line-height:11.5px;letter-spacing:0.000px;color:#16181d;">1</div>
<div class="t" style="left:814.50px;top:938.00px;font-size:13px;line-height:13px;letter-spacing:0.929px;color:#16181d;">Chomp Society</div>
<div class="t" style="left:1362.00px;top:938.00px;font-size:13px;line-height:13px;letter-spacing:0.000px;color:#5e6676;transform:scaleX(0.8163);transform-origin:0 0;">10%</div>
</body></html>
